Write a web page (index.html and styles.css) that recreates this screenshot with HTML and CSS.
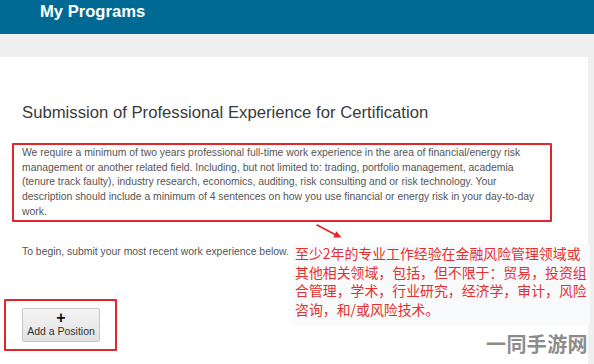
FILE: index.html
```html
<!DOCTYPE html>
<html lang="en">
<head>
<meta charset="utf-8">
<title>My Programs</title>
<link rel="stylesheet" href="styles.css">
</head>
<body>
<header class="topbar"><span class="brand">My Programs</span></header>
<main class="page">
  <section class="card">
    <h1 class="title">Submission of Professional Experience for Certification</h1>
    <p class="notice">We require a minimum of two years professional full-time work experience in the area of financial/energy risk<br>management or another related field. Including, but not limited to: trading, portfolio management, academia<br>(tenure track faulty), industry research, economics, auditing, risk consulting and or risk technology. Your<br>description should include a minimum of 4 sentences on how you use financial or energy risk in your day-to-day<br>work.</p>
    <p class="intro">To begin, submit your most recent work experience below.</p>
    <div class="add-box">
      <button class="add-btn" type="button"><span class="plus">+</span><span class="add-label">Add a Position</span></button>
    </div>
    <svg class="arrow" width="34" height="22" viewBox="0 0 34 22">
      <line x1="5" y1="5" x2="24" y2="15" stroke="#e3262a" stroke-width="1.6" stroke-linecap="round"/>
      <polygon points="29.5,17.6 21.2,17.4 24.4,11.2" fill="#e3262a"/>
    </svg>
    <p class="annotation">至少2年的专业工作经验在金融风险管理领域或<br>其他相关领域，包括，但不限于：贸易，投资组<br>合管理，学术，行业研究，经济学，审计，风险<br>咨询，和/或风险技术。</p>
    <div class="watermark"><span>一</span><span>同</span><span>手</span><span>游</span><span>网</span></div>
  </section>
</main>
</body>
</html>
```
FILE: styles.css
```css
html, body {
  margin: 0;
  padding: 0;
}
body {
  background: #efefef;
  font-family: "Liberation Sans", Arial, sans-serif;
  width: 594px;
  height: 364px;
  overflow: hidden;
}
.topbar {
  box-sizing: border-box;
  height: 34px;
  background: #016a94;
  padding: 1.5px 0 0 40px;
}
.brand {
  display: block;
  color: #ffffff;
  font-weight: bold;
  font-size: 16.6px;
  line-height: 20px;
}
.page {
  padding: 23px 6px 0 0;
}
.card {
  position: relative;
  background: #ffffff;
  height: 307px;
  padding-top: 46px;
  box-sizing: border-box;
}
.title {
  margin: 0 0 20px 22px;
  font-weight: normal;
  font-size: 16.7px;
  line-height: 20px;
  color: #3a3a3a;
}
.notice {
  margin: 0 36px 0 12px;
  border: 2px solid #e3262a;
  border-radius: 1px;
  padding: 1px 8px 0 8px;
  font-size: 10.4px;
  line-height: 14.7px;
  color: #555555;
  white-space: nowrap;
}
.intro {
  width: fit-content;
  margin: 23px 0 0 22px;
  font-size: 10.4px;
  line-height: 14.7px;
  color: #555555;
}
.add-box {
  box-sizing: border-box;
  margin: 40px 0 0 4px;
  width: 113px;
  height: 52px;
  border: 2px solid #e3262a;
  border-radius: 1px;
  padding: 7px 0 0 16px;
}
.add-btn {
  box-sizing: border-box;
  width: 78px;
  height: 34px;
  margin: 0;
  padding: 2px 0 0 0;
  border: 1px solid #c8c8c8;
  border-radius: 2px;
  background: linear-gradient(#f4f4f4, #e2e2e2);
  display: flex;
  flex-direction: column;
  align-items: center;
  font-family: "Liberation Sans", Arial, sans-serif;
}
.plus {
  font-size: 16px;
  font-weight: bold;
  line-height: 13px;
  color: #111111;
}
.add-label {
  font-size: 10.5px;
  line-height: 15px;
  color: #333333;
}
.arrow {
  position: absolute;
  left: 312px;
  top: 163px;
}
.annotation {
  position: absolute;
  left: 293px;
  top: 187px;
  margin: 0;
  padding: 0 3px 7px 2px;
  font-family: "Noto Sans CJK SC", sans-serif;
  font-size: 13.9px;
  line-height: 18.5px;
  color: #e3302f;
  background: #f9fafc;
  white-space: nowrap;
}
.watermark {
  position: absolute;
  right: 0;
  bottom: 9px;
  display: grid;
  grid-template-columns: repeat(5, 20.4px);
  font-family: "Noto Sans CJK SC", sans-serif;
  font-weight: 700;
  font-size: 20px;
  line-height: 22px;
  color: #8c8c8c;
}
```
